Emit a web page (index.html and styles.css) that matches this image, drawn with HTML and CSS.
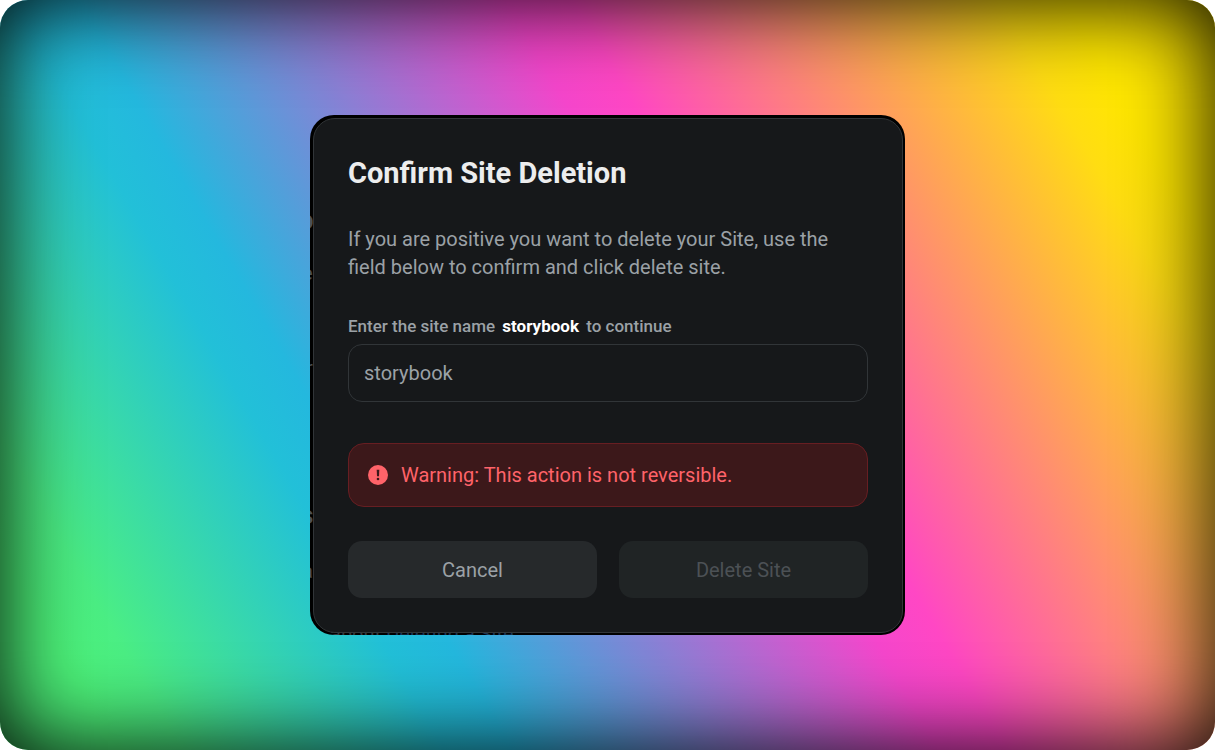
FILE: index.html
```html
<!DOCTYPE html>
<html lang="en">
<head>
<meta charset="utf-8">
<meta name="viewport" content="width=device-width, initial-scale=1">
<title>Confirm Site Deletion</title>
<link rel="stylesheet" href="styles.css">
</head>
<body>
<main class="backdrop">
  <div class="frame">
    <span class="behind behind-p" aria-hidden="true">p</span>
    <span class="behind behind-e" aria-hidden="true">e</span>
    <span class="behind behind-r" aria-hidden="true">r</span>
    <span class="behind behind-s" aria-hidden="true">s</span>
    <span class="behind behind-a" aria-hidden="true">a</span>
    <p class="behind behind-line" aria-hidden="true">about <span class="behind-link">Deleting a Site</span></p>
    <form class="dialog" role="dialog" aria-labelledby="dialog-title">
      <h1 class="title" id="dialog-title">Confirm Site Deletion</h1>
      <p class="description">If you are positive you want to delete your Site, use the field below to confirm and click delete site.</p>
      <div class="field">
        <label class="label" for="site-name">Enter the site name <strong class="site">storybook</strong> to continue</label>
        <input class="input" id="site-name" type="text" placeholder="storybook">
      </div>
      <div class="warning" role="alert">
        <svg class="warning-icon" viewBox="0 0 20 20" aria-hidden="true">
          <circle cx="10" cy="10" r="10" fill="#ff6369"/>
          <path d="M8.7 4.8h2.6l-.3 6.4H9z" fill="#3c181a"/>
          <circle cx="10" cy="14" r="1.3" fill="#3c181a"/>
        </svg>
        <span>Warning: This action is not reversible.</span>
      </div>
      <div class="actions">
        <button class="button" type="button">Cancel</button>
        <button class="button" type="submit" disabled>Delete Site</button>
      </div>
    </form>
  </div>
</main>
</body>
</html>
```
FILE: styles.css
```css
* {
  box-sizing: border-box;
}

body {
  margin: 0;
  background: #fff;
  font-family: Roboto, "Liberation Sans", sans-serif;
  font-size: 20px;
  line-height: 28px;
  color: #9ba1a6;
}

.backdrop {
  display: flex;
  align-items: center;
  justify-content: center;
  min-height: 100vh;
  padding: 24px;
  border-radius: 28px;
  background: linear-gradient(60deg, #4df47a 7%, #4bee84 11%, #22c0d8 27%, #24b8de 31%, #f546cc 57%, #ff47c4 61%, #ffdd12 87%, #ffe700 91%);
  box-shadow: inset 0 0 90px #000;
}

.frame {
  position: relative;
  width: 100%;
  max-width: 595px;
  padding: 3px 2px 2px 3px;
  border-radius: 24px;
  overflow: hidden;
  background: #000;
}

.dialog {
  position: relative;
  display: flex;
  flex-direction: column;
  padding: 36px 34px 34px;
  border: 1px solid #313538;
  border-radius: 22px;
  background: #16181a;
}

/* Page content that shows in the narrow gap round the dialog */
.behind {
  position: absolute;
  margin: 0;
  color: #4c5155;
}

.behind-p {
  top: 91px;
  left: -11px;
  font-size: 26px;
  font-weight: 500;
}

.behind-e {
  top: 144px;
  left: -8px;
}

.behind-r {
  top: 239px;
  left: -4px;
}

.behind-s {
  top: 386px;
  left: -10px;
  font-size: 26px;
  font-weight: 700;
}

.behind-a {
  top: 442px;
  left: -8px;
}

.behind-line {
  left: 20px;
  bottom: -13px;
  color: #35393c;
}

.behind-link {
  color: #1b3552;
}

.title {
  margin: 0 0 34px;
  font-size: 29px;
  line-height: 36px;
  font-weight: 700;
  color: #ecedee;
}

.description {
  margin: 0 0 33px;
}

.field {
  display: flex;
  flex-direction: column;
  gap: 6px;
  margin-bottom: 41px;
}

.label {
  font-size: 17px;
  line-height: 24px;
  font-weight: 500;
}

.site {
  margin: 0 3px;
  font-weight: 700;
  color: #fff;
}

.input {
  width: 100%;
  height: 58px;
  padding: 0 15px;
  border: 1px solid #313538;
  border-radius: 14px;
  background: transparent;
  font: inherit;
  color: #ecedee;
}

.input::placeholder {
  color: #9ba1a6;
  opacity: 1;
}

.warning {
  display: flex;
  align-items: center;
  gap: 13px;
  margin-bottom: 34px;
  padding: 17px 19px;
  border: 1px solid #671e22;
  border-radius: 16px;
  background: #3c181a;
  color: #ff6369;
}

.warning-icon {
  flex: none;
  width: 20px;
  height: 20px;
}

.actions {
  display: grid;
  grid-template-columns: 1fr 1fr;
  gap: 22px;
}

.button {
  height: 57px;
  padding: 0 16px;
  border: 0;
  border-radius: 14px;
  background: #26292b;
  font: inherit;
  color: #9ba1a6;
}

.button:disabled {
  background: #202425;
  color: #4c5155;
}
```
